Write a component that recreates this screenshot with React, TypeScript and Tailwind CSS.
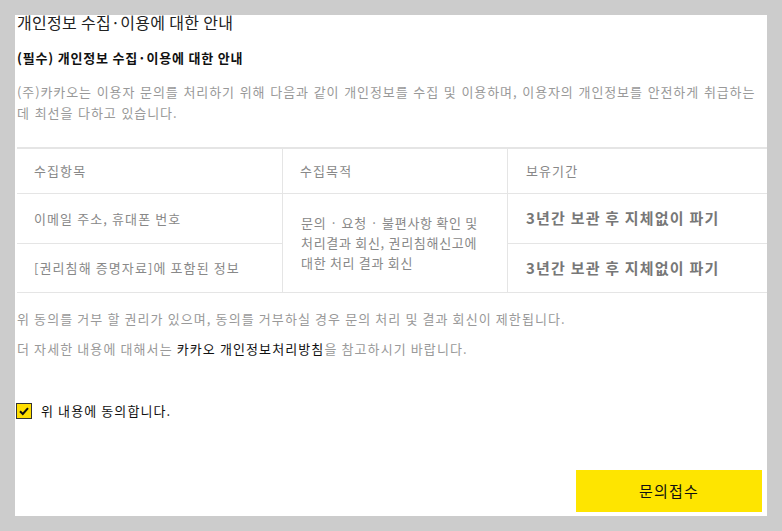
import React from "react";

const font = { fontFamily: '"Noto Sans CJK KR", "Noto Sans", sans-serif' };

export default function App() {
  return (
    <div className="w-[782px] h-[531px] bg-[#cccccc] p-[15px]" style={font}>
      <div className="h-full bg-white overflow-hidden flex flex-col pl-[2px]">
        <h1 className="text-[16px] leading-[20px] text-[#222] mt-[-3px] font-normal tracking-[0.3px]">
          개인정보 수집·이용에 대한 안내
        </h1>
        <h2 className="mt-[16px] text-[13px] leading-[20px] font-bold text-[#111] tracking-[0.8px]">
          (필수) 개인정보 수집·이용에 대한 안내
        </h2>
        <p className="mt-[13px] text-[13px] leading-[21px] text-[#999] tracking-[0.9px] [word-spacing:1px] whitespace-nowrap">
          (주)카카오는 이용자 문의를 처리하기 위해 다음과 같이 개인정보를 수집 및 이용하며, 이용자의 개인정보를 안전하게 취급하는
          <br />
          데 최선을 다하고 있습니다.
        </p>

        <div className="mt-[24px] border-t-[2px] border-[#e5e5e5] grid grid-cols-[266px_225px_1fr] text-[13px] text-[#888] tracking-[1.1px]">
          <div className="h-[45px] flex items-center pl-[17px] border-b border-r border-[#e5e5e5]">수집항목</div>
          <div className="h-[45px] flex items-center pl-[17px] border-b border-r border-[#e5e5e5]">수집목적</div>
          <div className="h-[45px] flex items-center pl-[18px] border-b border-[#e5e5e5]">보유기간</div>

          <div className="h-[50px] flex items-center pl-[17px] border-b border-r border-[#e5e5e5]">이메일 주소, 휴대폰 번호</div>
          <div className="row-span-2 flex items-center pl-[18px] pr-[4px] border-b border-r border-[#e5e5e5] leading-[20px] tracking-[0.7px]">
            <span>
              문의 · 요청 · 불편사항 확인 및<br />
              처리결과 회신, 권리침해신고에<br />
              대한 처리 결과 회신
            </span>
          </div>
          <div className="h-[50px] flex items-center pl-[18px] border-b border-[#e5e5e5] text-[15px] font-bold text-[#777] tracking-[1.2px]">3년간 보관 후 지체없이 파기</div>

          <div className="h-[49px] flex items-center pl-[17px] border-b border-r border-[#e5e5e5]">[권리침해 증명자료]에 포함된 정보</div>
          <div className="h-[49px] flex items-center pl-[18px] border-b border-[#e5e5e5] text-[15px] font-bold text-[#777] tracking-[1.2px]">3년간 보관 후 지체없이 파기</div>
        </div>

        <p className="mt-[16px] text-[13px] leading-[20px] text-[#999] tracking-[1.1px]">
          위 동의를 거부 할 권리가 있으며, 동의를 거부하실 경우 문의 처리 및 결과 회신이 제한됩니다.
        </p>
        <p className="mt-[10px] text-[13px] leading-[20px] text-[#999] tracking-[1.1px]">
          더 자세한 내용에 대해서는 <span className="text-[#111]">카카오 개인정보처리방침</span>을 참고하시기 바랍니다.
        </p>

        <label className="mt-[42px] flex items-center gap-[9px] text-[13px] leading-[20px] text-[#111] tracking-[1.1px]">
          <span className="w-[16px] h-[16px] ml-[-1px] bg-[#ffde00] border border-[#333] flex items-center justify-center">
            <svg width="12" height="12" viewBox="0 0 12 12">
              <path d="M2 6.2 L4.8 9 L10 3.2" fill="none" stroke="#111" strokeWidth="2" />
            </svg>
          </span>
          위 내용에 동의합니다.
        </label>

        <div className="mt-auto mb-[4px] mr-[5px] flex justify-end">
          <button className="w-[186px] h-[42px] bg-[#fee500] text-[15px] text-[#111] tracking-[1.2px]">문의접수</button>
        </div>
      </div>
    </div>
  );
}
